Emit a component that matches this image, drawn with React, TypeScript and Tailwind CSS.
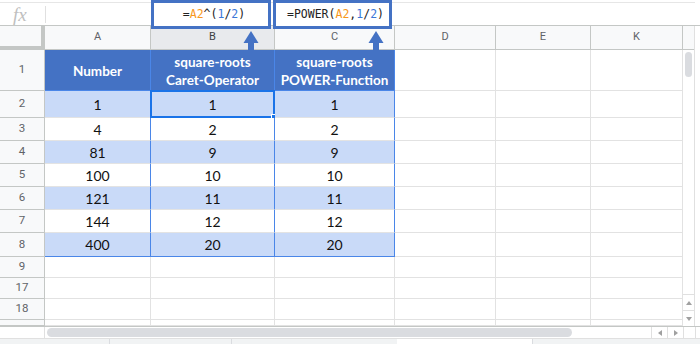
import React from 'react';

const COLS = ['A', 'B', 'C', 'D', 'E', 'K'];

const ROWS = [
  { n: '2', h: 'h-[27px]', v: ['1', '1', '1'], shade: true },
  { n: '3', h: 'h-[23px]', v: ['4', '2', '2'], shade: false },
  { n: '4', h: 'h-[23px]', v: ['81', '9', '9'], shade: true },
  { n: '5', h: 'h-[23px]', v: ['100', '10', '10'], shade: false },
  { n: '6', h: 'h-[23px]', v: ['121', '11', '11'], shade: true },
  { n: '7', h: 'h-[23px]', v: ['144', '12', '12'], shade: false },
  { n: '8', h: 'h-[24px]', v: ['400', '20', '20'], shade: true },
];

const EMPTY_ROWS = [
  { n: '9', h: 'h-[21px]' },
  { n: '17', h: 'h-[21px]' },
  { n: '18', h: 'h-[21px]' },
  { n: '', h: 'h-[6px]' },
];

const rowHead =
  "flex items-center justify-center bg-[#f8f9fa] border-r border-b border-[#c4c7c5] text-[11.5px] text-[#5f6368] font-['Roboto',sans-serif]";
const emptyCell = 'border-r border-b border-[#e2e2e2] bg-white';
const tableText = "font-['Lato',sans-serif] text-[14px] text-[#111]";

// small grey scroll arrow, dir = up | down | left | right
const Tri = ({ dir }: { dir: 'up' | 'down' | 'left' | 'right' }) => {
  const pts = {
    up: '3,1 6,5 0,5',
    down: '0,1 6,1 3,5',
    left: '5,0 5,6 1,3',
    right: '1,0 1,6 5,3',
  }[dir];
  return (
    <svg width="6" height="6" viewBox="0 0 6 6">
      <polygon points={pts} fill="#a0a0a0" />
    </svg>
  );
};

const Arrow = ({ x }: { x: number }) => (
  <svg
    className="absolute top-0 pointer-events-none"
    style={{ left: x - 9 }}
    width="18"
    height="54"
    viewBox="0 0 18 54"
  >
    <polygon points="9,31 1.5,43 16.5,43" fill="#4472c4" />
    <rect x="6" y="42" width="6" height="9" fill="#4472c4" />
  </svg>
);

const FormulaBox = ({ left, width, children }: { left: string; width: string; children: React.ReactNode }) => (
  <div
    className={`absolute top-0 ${left} ${width} h-[29px] bg-white border-[3px] border-[#4472c4] flex items-center justify-center pl-[6px] font-['DejaVu_Sans_Mono',monospace] text-[11.5px] text-[#222]`}
  >
    {children}
  </div>
);

export default function App() {
  return (
    <div className="relative w-[700px] h-[344px] bg-white overflow-hidden select-none">
      {/* formula bar */}
      <div className="h-[26px] pt-[2px] flex flex-col border-b border-[#c4c7c5]">
        <div className="flex-1 flex items-center border-t border-[#e6e6e6] mr-[5px]">
          <span className="w-[45px] pl-[13px] font-['Liberation_Serif',serif] italic text-[19px] text-[#c0c0c0] leading-none">
            fx
          </span>
          <span className="w-px h-[17px] bg-[#e0e0e0]" />
        </div>
      </div>

      <div className="flex">
        {/* sheet grid */}
        <div className="grid grid-cols-[45px_106px_124px_120px_101px_95px_92px] w-[683px]">
          {/* column headers */}
          <div className="h-[24px] bg-[#f8f9fa] border-r-4 border-b-4 border-[#c4c7c5]" />
          {COLS.map((c) => (
            <div
              key={c}
              className={`h-[24px] flex items-center justify-center border-r border-b border-[#c4c7c5] text-[11px] font-['Roboto',sans-serif] ${
                c === 'B' ? 'bg-[#e8eaed] text-[#3c4043]' : 'bg-[#f8f9fa] text-[#5f6368]'
              }`}
            >
              {c}
            </div>
          ))}

          {/* row 1: table header */}
          <div className={`${rowHead} h-[41px]`}>1</div>
          {[['Number'], ['square-roots', 'Caret-Operator'], ['square-roots', 'POWER-Function']].map((lines, i) => (
            <div
              key={i}
              className="h-[41px] bg-[#4472c4] border-r border-b border-[#4a86e8] flex flex-col items-center justify-center pt-[2px] font-['Lato',sans-serif] font-bold text-[13.5px] leading-[18px] text-white"
            >
              {lines.map((l) => (
                <span key={l}>{l}</span>
              ))}
            </div>
          ))}
          <div className={`h-[41px] ${emptyCell}`} />
          <div className={`h-[41px] ${emptyCell}`} />
          <div className={`h-[41px] ${emptyCell}`} />

          {/* data rows */}
          {ROWS.map((r, ri) => {
            const last = ri === ROWS.length - 1;
            return (
              <React.Fragment key={r.n}>
                <div className={`${rowHead} ${r.h} ${r.n === '2' ? 'bg-[#e8eaed] text-[#3c4043]' : ''}`}>{r.n}</div>
                {r.v.map((val, ci) => (
                  <div
                    key={ci}
                    className={`relative ${r.h} flex items-center justify-center border-r border-b border-r-[#4a86e8] ${
                      last ? 'border-b-[#4a86e8]' : 'border-b-[#e3e3e3]'
                    } ${r.shade ? 'bg-[#c9daf8]' : 'bg-white'} ${tableText}`}
                  >
                    {val}
                    {r.n === '2' && ci === 1 && (
                      <>
                        <div className="absolute -left-px -top-px -right-px -bottom-px border-2 border-[#1a73e8]" />
                        <div className="absolute -right-[4px] -bottom-[4px] w-[7px] h-[7px] bg-[#1a73e8] border border-white" />
                      </>
                    )}
                  </div>
                ))}
                <div className={`${r.h} ${emptyCell}`} />
                <div className={`${r.h} ${emptyCell}`} />
                <div className={`${r.h} ${emptyCell}`} />
              </React.Fragment>
            );
          })}

          {/* empty rows */}
          {EMPTY_ROWS.map((r, i) => (
            <React.Fragment key={i}>
              <div className={`${rowHead} ${r.h}`}>{r.n}</div>
              {COLS.map((c) => (
                <div key={c} className={`${r.h} ${emptyCell}`} />
              ))}
            </React.Fragment>
          ))}
        </div>

        {/* vertical scrollbar */}
        <div className="w-[12px] flex flex-col border-r border-[#e0e0e0]">
          <div className="h-[24px] bg-[#f8f9fa] border-b border-[#c4c7c5]" />
          <div className="flex-1 px-[2px] pt-[2px]">
            <div className="h-[25px] rounded-full bg-[#dadce0]" />
          </div>
          <div className="h-[16px] border-t border-[#e0e0e0] flex items-center justify-center">
            <Tri dir="up" />
          </div>
          <div className="h-[16px] border-t border-[#e0e0e0] flex items-center justify-center">
            <Tri dir="down" />
          </div>
        </div>
        <div className="w-[5px]" />
      </div>

      {/* horizontal scrollbar */}
      <div className="h-[12px] flex border-t border-[#c4c7c5]">
        <div className="w-[45px] border-r border-[#e0e0e0]" />
        <div className="w-[606px] flex items-center pl-[2px]">
          <div className="w-[525px] h-[9px] rounded-full bg-[#dadce0]" />
        </div>
        <div className="w-[16px] border-l border-[#e0e0e0] flex items-center justify-center">
          <Tri dir="left" />
        </div>
        <div className="w-[16px] border-l border-[#e0e0e0] flex items-center justify-center">
          <Tri dir="right" />
        </div>
        <div className="w-[12px] border-l border-[#e0e0e0]" />
        <div className="w-[5px] border-l border-[#e0e0e0]" />
      </div>

      {/* sheet tab strip */}
      <div className="h-[6px] flex bg-[#f1f3f4] border-t border-[#e0e0e0]">
        <div className="w-[110px] border-r border-[#dadce0]" />
        <div className="w-[122px] border-r border-[#dadce0]" />
        <div className="w-[165px]" />
        <div className="w-[135px] bg-white" />
        <div className="flex-1 border-l border-[#dadce0]" />
      </div>

      {/* annotations */}
      <FormulaBox left="left-[151px]" width="w-[120px]">
        <span>=</span>
        <span className="text-[#f7981d]">A2</span>
        <span>^(</span>
        <span className="text-[#3c78d8]">1</span>
        <span>/</span>
        <span className="text-[#3c78d8]">2</span>
        <span>)</span>
      </FormulaBox>
      <FormulaBox left="left-[273px]" width="w-[119px]">
        <span>=POWER(</span>
        <span className="text-[#f7981d]">A2</span>
        <span>,</span>
        <span className="text-[#3c78d8]">1</span>
        <span>/</span>
        <span className="text-[#3c78d8]">2</span>
        <span>)</span>
      </FormulaBox>
      <Arrow x={251} />
      <Arrow x={376} />
    </div>
  );
}
